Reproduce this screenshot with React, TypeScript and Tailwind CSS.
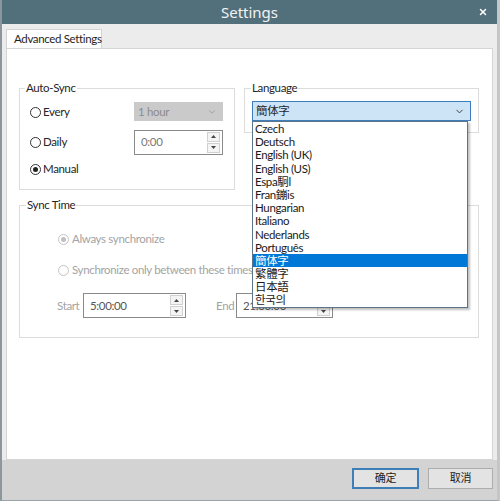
import { X, ChevronDown } from 'lucide-react';

const font = { fontFamily: 'Lato, "Noto Sans CJK SC", sans-serif' };

const languages = [
  'Czech',
  'Deutsch',
  'English (UK)',
  'English (US)',
  'Espa駉l',
  'Fran鏰is',
  'Hungarian',
  'Italiano',
  'Nederlands',
  'Português',
  '簡体字',
  '繁體字',
  '日本語',
  '한국의',
];

function Radio({ checked, disabled }: { checked?: boolean; disabled?: boolean }) {
  return (
    <span
      className={`flex h-[11px] w-[11px] shrink-0 items-center justify-center rounded-full border bg-white ${
        disabled ? 'border-[#c4c4c4]' : 'border-[#333333]'
      }`}
    >
      {checked && (
        <span className={`h-[5px] w-[5px] rounded-full ${disabled ? 'bg-[#c0c0c0]' : 'bg-[#222222]'}`} />
      )}
    </span>
  );
}

function Spinner({ value, width, dim }: { value: string; width: string; dim?: boolean }) {
  return (
    <div className={`flex h-[25px] items-center border border-[#8a8a8a] bg-white ${width}`}>
      <span className={`flex-1 pl-[6px] ${dim ? 'text-[#7a7a7a]' : 'text-[#555555]'}`}>{value}</span>
      <div className="mr-[2px] flex flex-col gap-[1px]">
        <span className="flex h-[10px] w-[13px] items-center justify-center border border-[#d0d0d0] bg-[#f4f4f4]">
          <svg width="5" height="3" viewBox="0 0 5 3"><path d="M0 3 L2.5 0 L5 3 Z" fill="#444" /></svg>
        </span>
        <span className="flex h-[10px] w-[13px] items-center justify-center border border-[#d0d0d0] bg-[#f4f4f4]">
          <svg width="5" height="3" viewBox="0 0 5 3"><path d="M0 0 L2.5 3 L5 0 Z" fill="#444" /></svg>
        </span>
      </div>
    </div>
  );
}

export default function App() {
  return (
    <div
      className="flex h-[501px] w-[500px] flex-col border-l-2 border-r-[3px] border-b border-l-[#8b979d] border-r-[#c6c6c6] border-b-[#9aa3a8] bg-[#ececec] text-[11.5px] tracking-[-0.35px] text-[#262626]"
      style={font}
    >
      {/* title bar */}
      <div className="relative flex h-[24px] shrink-0 items-center justify-center bg-[#52707c]">
        <span className="text-[15px] tracking-normal text-[#f2f2f2]" style={{ fontFamily: '"Noto Sans", sans-serif' }}>
          Settings
        </span>
        <X className="absolute right-[9px] top-[7px] text-white" size={10} strokeWidth={3.5} />
      </div>

      <div className="flex flex-1 flex-col px-[4px]">
        {/* tab strip */}
        <div className="flex h-[24px] shrink-0 items-end pt-[6px]">
          <div className="flex h-[19px] w-[96px] items-center whitespace-nowrap border border-b-0 border-[#d3d3d3] bg-white pl-[7px] text-[#1e1e1e]">
            Advanced Settings
          </div>
        </div>

        {/* panel */}
        <div className="h-[412px] border border-[#d5d5d5] bg-white pl-[12px] pr-[13px] pt-[31px]">
          <div className="flex items-start gap-[9px]">
            <fieldset className="w-[216px] border border-[#dcdcdc] px-0 pb-[7px]">
              <legend className="ml-[5px] px-[1px] leading-[16px]">Auto-Sync</legend>
              <div className="flex h-[32px] items-center justify-between pl-[10px] pr-[11px]">
                <div className="flex items-center gap-[2px]">
                  <Radio />
                  <span>Every</span>
                </div>
                <div className="mt-[-1px] flex h-[19px] w-[89px] items-center justify-between bg-[#cacaca] pl-[4px] pr-[6px] text-[#8c8c8c]">
                  <span>1 hour</span>
                  <ChevronDown size={10} className="text-[#9a9a9a]" />
                </div>
              </div>
              <div className="flex h-[28px] items-center justify-between pl-[10px] pr-[11px]">
                <div className="flex items-center gap-[2px]">
                  <Radio />
                  <span>Daily</span>
                </div>
                <Spinner value="0:00" width="w-[89px]" dim />
              </div>
              <div className="flex h-[26px] items-center pl-[10px]">
                <div className="flex items-center gap-[2px]">
                  <Radio checked />
                  <span>Manual</span>
                </div>
              </div>
            </fieldset>

            <fieldset className="w-[235px] border border-[#dcdcdc] px-[7px] pb-[11px]">
              <legend className="ml-[-1px] px-[1px] leading-[16px]">Language</legend>
              <div className="relative mt-[5px]">
                <div className="flex h-[20px] items-center justify-between border border-[#3d7fbd] bg-[#cde4f7] pl-[3px] pr-[5px]">
                  <span>簡体字</span>
                  <ChevronDown size={11} className="text-[#333]" />
                </div>
                <ul className="absolute left-0 top-full z-10 w-[216px] border border-[#5d7489] bg-white py-0 shadow-[2px_2px_2px_rgba(0,0,0,0.25)]">
                  {languages.map((lang, i) => (
                    <li
                      key={lang}
                      className={`h-[13.2px] overflow-hidden pl-[2px] leading-[13.2px] ${
                        i === 10 ? 'bg-[#0078d7] text-white' : 'text-[#1a1a1a]'
                      }`}
                    >
                      {lang}
                    </li>
                  ))}
                </ul>
              </div>
            </fieldset>
          </div>

          <fieldset className="mt-[7px] w-[460px] border border-[#dcdcdc] pb-[19px] text-[#a3a3a3]">
            <legend className="ml-[6px] px-[1px] leading-[16px] text-[#262626]">Sync Time</legend>
            <div className="mt-[14px] flex h-[24px] items-center gap-[3px] pl-[38px]">
              <Radio checked disabled />
              <span>Always synchronize</span>
            </div>
            <div className="mt-[7px] flex h-[24px] items-center gap-[3px] pl-[38px]">
              <Radio disabled />
              <span>Synchronize only between these times</span>
            </div>
            <div className="mt-[11px] flex h-[25px] items-center pl-[37px]">
              <span className="w-[26px]">Start</span>
              <Spinner value="5:00:00" width="w-[103px]" />
              <span className="ml-[30px] w-[20px]">End</span>
              <Spinner value="21:00:00" width="w-[97px]" />
            </div>
          </fieldset>
        </div>
      </div>

      {/* footer */}
      <div className="flex h-[40px] shrink-0 items-start justify-end gap-[9px] bg-[#d3d3d3] pr-[4px] pt-[8px]">
        <button className="h-[21px] w-[67px] border-2 border-[#3f7fb8] bg-[#e3e3e3] text-[11px] text-[#222]">
          确定
        </button>
        <button className="h-[21px] w-[65px] border border-[#adadad] bg-[#e3e3e3] text-[11px] text-[#222]">
          取消
        </button>
      </div>
    </div>
  );
}
